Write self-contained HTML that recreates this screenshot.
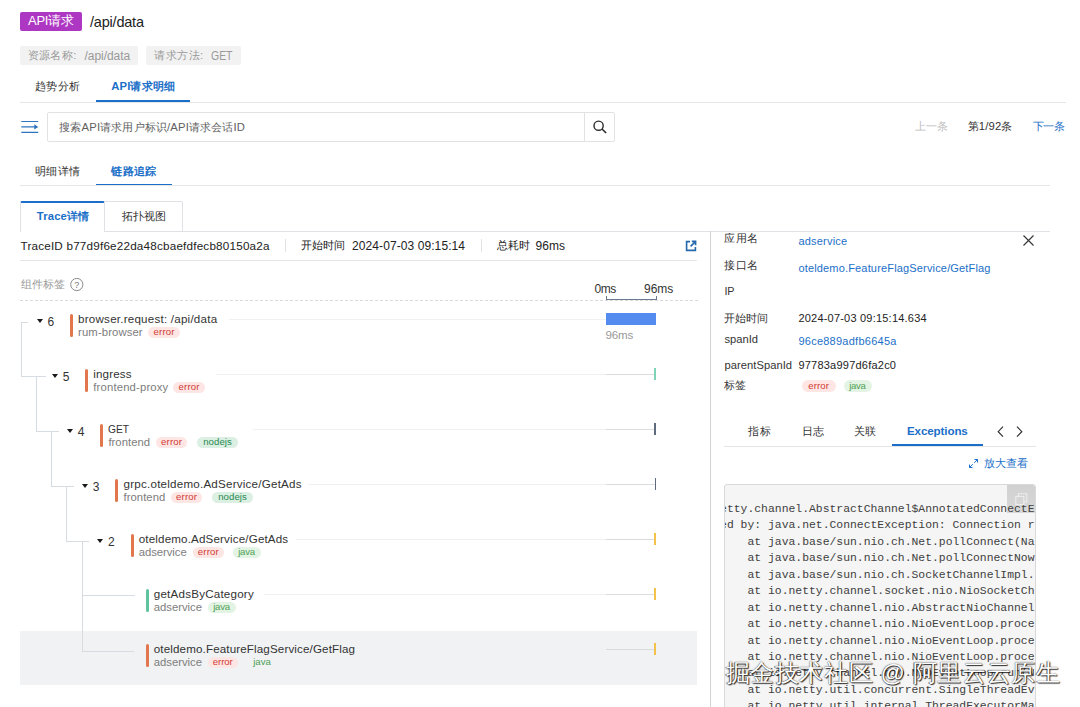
<!DOCTYPE html>
<html><head><meta charset="utf-8">
<style>
*{box-sizing:border-box;margin:0;padding:0}
html,body{width:1080px;height:707px;overflow:hidden;background:#fff}
body{font-family:"Liberation Sans",sans-serif;font-size:12px;color:#333;position:relative}
.a{position:absolute;white-space:nowrap}
.arr{position:absolute;width:0;height:0;border-left:3.5px solid transparent;border-right:3.5px solid transparent;border-top:4.5px solid #1a1a1a}
.code{position:absolute;left:724px;top:484px;width:311.7px;height:230px;background:#f5f5f5;border:1px solid #d9d9d9;border-radius:3px;overflow:hidden}
.code pre{position:absolute;left:-4.9px;top:15.8px;font-family:"Liberation Mono",monospace;font-size:11.4px;line-height:16.47px;color:#404040}
</style></head><body>
<div class="a" style="left:20px;top:12.2px;width:61.7px;height:18.8px;background:#ad37c3;border-radius:2px"></div>
<div class="a" style="left:20px;top:46.3px;width:117.5px;height:18.6px;background:#f2f2f2;border-radius:2px"></div>
<div class="a" style="left:146px;top:46.3px;width:95.3px;height:18.6px;background:#f2f2f2;border-radius:2px"></div>
<div class="a" style="left:95.75px;top:100px;width:94.25px;height:2px;background:#1b6fc8;"></div>
<div class="a" style="left:20px;top:101.5px;width:1046px;height:1px;background:#e5e6e8;"></div>
<svg class="a" style="left:20.6px;top:119.9px" width="18" height="14" viewBox="0 0 18 14"><g stroke="#2f74bd" stroke-width="1.2" fill="none"><path d="M0.3 1.5H17.2M0.3 6.9H16M0.3 12.4H17.2"/></g><path d="M13.3 4.3L17.3 6.9L13.3 9.5Z" fill="#2f74bd"/></svg>
<div class="a" style="left:46.75px;top:112px;width:568.5px;height:29.5px;border:1px solid #e2e2e2;border-radius:2px"></div>
<div class="a" style="left:584px;top:112px;width:1px;height:29.5px;background:#e2e2e2;"></div>
<svg class="a" style="left:593px;top:120px" width="15" height="15" viewBox="0 0 15 15"><circle cx="5.6" cy="5.7" r="4.6" stroke="#2a2a2a" stroke-width="1.4" fill="none"/><path d="M9 9L13.1 13" stroke="#2a2a2a" stroke-width="1.6" stroke-linecap="butt"/></svg>
<div class="a" style="left:95.75px;top:184px;width:75.75px;height:2.2px;background:#1b6fc8;"></div>
<div class="a" style="left:20px;top:185.3px;width:1030px;height:1px;background:#e5e6e8;"></div>
<div class="a" style="left:20px;top:231px;width:1030px;height:1px;background:#dfe1e4;"></div>
<div class="a" style="left:20.3px;top:201px;width:85px;height:31px;border:1px solid #dfe1e4;border-bottom:0;border-top:2px solid #1b6fc8;background:#fff;border-radius:2px 2px 0 0"></div>
<div class="a" style="left:104.3px;top:201.2px;width:78.5px;height:29.8px;border:1px solid #dfe1e4;border-bottom:0;border-radius:2px 2px 0 0"></div>
<div class="a" style="left:285.3px;top:239px;width:1px;height:13px;background:#e2e2e2;"></div>
<div class="a" style="left:481px;top:239px;width:1px;height:13px;background:#e2e2e2;"></div>
<svg class="a" style="left:685px;top:239.8px" width="12" height="12" viewBox="0 0 12 12"><g stroke="#2468ad" stroke-width="1.6" fill="none"><path d="M5 1.6H1.6V10.4H10.4V7"/><path d="M6.8 1.4H10.6V5.2M10.4 1.6L5.6 6.4"/></g></svg>
<div class="a" style="left:20px;top:260px;width:676.5px;height:1px;background:#e4e5e7;"></div>
<svg class="a" style="left:70px;top:278px" width="14" height="14" viewBox="0 0 14 14"><circle cx="6.8" cy="6.5" r="6.1" stroke="#8a8a8a" stroke-width="1" fill="none"/><text x="6.8" y="9.9" font-size="9" text-anchor="middle" fill="#777" font-family="Liberation Sans">?</text></svg>
<div class="a" style="left:20px;top:299.7px;width:679px;height:1px;background:repeating-linear-gradient(90deg,#dadada 0 3px,transparent 3px 5px)"></div>
<div class="a" style="left:605.5px;top:295.8px;width:51.3px;height:4px;border:1px solid #6b7a90;border-top:0"></div>
<div class="a" style="left:20px;top:631.3px;width:677px;height:54.2px;background:#f0f2f4;"></div>
<div class="a" style="left:710px;top:231px;width:1px;height:476px;background:#d2d3d5;"></div>
<div class="a" style="left:20.7px;top:321.7px;width:1px;height:55.30000000000001px;background:#d7dce2;"></div>
<div class="a" style="left:36.0px;top:376px;width:1px;height:56.19999999999999px;background:#d7dce2;"></div>
<div class="a" style="left:51.2px;top:431.2px;width:1px;height:55.60000000000002px;background:#d7dce2;"></div>
<div class="a" style="left:66.3px;top:485.8px;width:1px;height:56.400000000000034px;background:#d7dce2;"></div>
<div class="a" style="left:81.5px;top:541.2px;width:1px;height:110.29999999999995px;background:#d7dce2;"></div>
<div class="a" style="left:20.7px;top:321.7px;width:7px;height:1px;background:#d7dce2;"></div>
<div class="a" style="left:20.7px;top:376px;width:25px;height:1px;background:#d7dce2;"></div>
<div class="a" style="left:36.0px;top:431.2px;width:23px;height:1px;background:#d7dce2;"></div>
<div class="a" style="left:51.2px;top:485.8px;width:23px;height:1px;background:#d7dce2;"></div>
<div class="a" style="left:66.3px;top:541.2px;width:23px;height:1px;background:#d7dce2;"></div>
<div class="a" style="left:81.5px;top:595.2px;width:53px;height:1px;background:#d7dce2;"></div>
<div class="a" style="left:81.5px;top:650.5px;width:52px;height:1px;background:#d7dce2;"></div>
<div class="arr" style="left:36.75px;top:319.2px"></div>
<div class="a" style="left:70.0px;top:314.2px;width:3px;height:22.6px;background:#e2764d;border-radius:1.5px"></div>
<div class="a" style="left:148px;top:326.69999999999993px;width:32px;height:11.4px;background:#fde6e3;border-radius:6px"></div>
<div class="a" style="left:229px;top:318.59999999999997px;width:377px;height:1px;background:#eff0f2;"></div>
<div class="a" style="left:606.2px;top:313.1px;width:50px;height:11.5px;background:#548bee;"></div>
<div class="arr" style="left:51.85px;top:374.2px"></div>
<div class="a" style="left:85.15px;top:369.2px;width:3px;height:22.6px;background:#e2764d;border-radius:1.5px"></div>
<div class="a" style="left:173px;top:381.69999999999993px;width:32px;height:11.4px;background:#fde6e3;border-radius:6px"></div>
<div class="a" style="left:216px;top:373.59999999999997px;width:390px;height:1px;background:#eff0f2;"></div>
<div class="a" style="left:606px;top:373.5px;width:48.6px;height:1px;background:#d9dcde;"></div>
<div class="a" style="left:654.3px;top:368.2px;width:2px;height:11.8px;background:#7fd3b6;"></div>
<div class="arr" style="left:66.95px;top:429.2px"></div>
<div class="a" style="left:100.3px;top:424.2px;width:3px;height:22.6px;background:#e2764d;border-radius:1.5px"></div>
<div class="a" style="left:155.75px;top:436.69999999999993px;width:31.5px;height:11.4px;background:#fde6e3;border-radius:6px"></div>
<div class="a" style="left:197px;top:436.69999999999993px;width:41px;height:11.4px;background:#dcefe3;border-radius:6px"></div>
<div class="a" style="left:252.5px;top:428.59999999999997px;width:353.5px;height:1px;background:#eff0f2;"></div>
<div class="a" style="left:606px;top:428.5px;width:48.6px;height:1px;background:#d9dcde;"></div>
<div class="a" style="left:654.3px;top:423.2px;width:2px;height:11.8px;background:#5d6b7c;"></div>
<div class="arr" style="left:82.05px;top:484.2px"></div>
<div class="a" style="left:115.45px;top:479.2px;width:3px;height:22.6px;background:#e2764d;border-radius:1.5px"></div>
<div class="a" style="left:170.75px;top:491.69999999999993px;width:31.5px;height:11.4px;background:#fde6e3;border-radius:6px"></div>
<div class="a" style="left:212px;top:491.69999999999993px;width:41px;height:11.4px;background:#dcefe3;border-radius:6px"></div>
<div class="a" style="left:308px;top:483.59999999999997px;width:298px;height:1px;background:#eff0f2;"></div>
<div class="a" style="left:606px;top:483.5px;width:48.6px;height:1px;background:#d9dcde;"></div>
<div class="a" style="left:655px;top:478.2px;width:1.2px;height:11.8px;background:#5d6b7c;"></div>
<div class="arr" style="left:97.15px;top:539.1999999999999px"></div>
<div class="a" style="left:130.6px;top:534.1999999999999px;width:3px;height:22.6px;background:#e2764d;border-radius:1.5px"></div>
<div class="a" style="left:192.5px;top:546.6999999999999px;width:31.5px;height:11.4px;background:#fde6e3;border-radius:6px"></div>
<div class="a" style="left:232.5px;top:546.6999999999999px;width:28.25px;height:11.4px;background:#e4f4e4;border-radius:6px"></div>
<div class="a" style="left:296px;top:538.6px;width:310px;height:1px;background:#eff0f2;"></div>
<div class="a" style="left:606px;top:538.5px;width:48.6px;height:1px;background:#d9dcde;"></div>
<div class="a" style="left:654.3px;top:533.1999999999999px;width:2px;height:11.8px;background:#f3c24b;"></div>
<div class="a" style="left:145.75px;top:589.1999999999999px;width:3px;height:22.6px;background:#5fc39d;border-radius:1.5px"></div>
<div class="a" style="left:207.5px;top:601.6999999999999px;width:28.25px;height:11.4px;background:#e4f4e4;border-radius:6px"></div>
<div class="a" style="left:263.75px;top:593.6px;width:342.25px;height:1px;background:#eff0f2;"></div>
<div class="a" style="left:606px;top:593.5px;width:48.6px;height:1px;background:#d9dcde;"></div>
<div class="a" style="left:654.3px;top:588.1999999999999px;width:2px;height:11.8px;background:#f3c24b;"></div>
<div class="a" style="left:145.75px;top:644.1999999999999px;width:3px;height:22.6px;background:#e2764d;border-radius:1.5px"></div>
<div class="a" style="left:207.5px;top:656.6999999999999px;width:30.5px;height:11.4px;background:#fde6e3;border-radius:6px"></div>
<div class="a" style="left:606px;top:648.5px;width:48.6px;height:1px;background:#d9dcde;"></div>
<div class="a" style="left:654.3px;top:643.1999999999999px;width:2px;height:11.8px;background:#f3c24b;"></div>
<svg class="a" style="left:1023.3px;top:235.2px" width="11" height="11" viewBox="0 0 11 11"><path d="M0.5 0.5L10.5 10.5M10.5 0.5L0.5 10.5" stroke="#333" stroke-width="1.1"/></svg>
<div class="a" style="left:801.6px;top:380.2px;width:34px;height:11.4px;background:#fde6e3;border-radius:6px"></div>
<div class="a" style="left:843.5px;top:380.2px;width:28px;height:11.4px;background:#e4f4e4;border-radius:6px"></div>
<svg class="a" style="left:997px;top:426.3px" width="7" height="11.4" viewBox="0 0 7 11.4"><path d="M6 0.7L1.2 5.7L6 10.7" stroke="#333" stroke-width="1.2" fill="none"/></svg>
<svg class="a" style="left:1016.2px;top:426.3px" width="7" height="11.4" viewBox="0 0 7 11.4"><path d="M1 0.7L5.8 5.7L1 10.7" stroke="#333" stroke-width="1.2" fill="none"/></svg>
<div class="a" style="left:892.3px;top:444px;width:91px;height:2.2px;background:#1b6fc8;"></div>
<div class="a" style="left:724px;top:445.6px;width:312px;height:1px;background:#e4e5e7;"></div>
<svg class="a" style="left:969.4px;top:459.4px" width="9" height="9" viewBox="0 0 9 9"><g stroke="#1b6fc8" stroke-width="1" fill="none"><path d="M5.5 0.5H8.5V3.5M8.5 0.5L5.2 3.8M3.5 8.5H0.5V5.5M0.5 8.5L3.8 5.2"/></g></svg>
<div class="code"><div style="position:absolute;right:0;top:0;width:27.5px;height:28px;background:linear-gradient(#d1d1d1,#d8d8d8);border-radius:0 2px 0 0"></div><svg style="position:absolute;right:7.2px;top:7.5px" width="12.5" height="12.5" viewBox="0 0 13 13"><g stroke="#ececec" stroke-width="1.2" fill="none"><rect x="0.8" y="3.6" width="8.4" height="8.4"/><path d="M3.6 3.6V0.8H12.2V9.4H9.2"/></g></svg><pre>etty.channel.AbstractChannel$AnnotatedConnectE
ed by: java.net.ConnectException: Connection r
    at java.base/sun.nio.ch.Net.pollConnect(Na
    at java.base/sun.nio.ch.Net.pollConnectNow
    at java.base/sun.nio.ch.SocketChannelImpl.
    at io.netty.channel.socket.nio.NioSocketCh
    at io.netty.channel.nio.AbstractNioChannel
    at io.netty.channel.nio.NioEventLoop.proce
    at io.netty.channel.nio.NioEventLoop.proce
    at io.netty.channel.nio.NioEventLoop.proce
    at io.netty.channel.nio.NioEventLoop.run(N
    at io.netty.util.concurrent.SingleThreadEv
    at io.netty.util.internal.ThreadExecutorMa
    at io.netty.util.concurrent.FastThreadLoca</pre></div>
<div class="a" style="left:28px;top:14.00px;font-size:13px;line-height:14px;color:#fff;letter-spacing:-0.242px;">API请求</div>
<div class="a" style="left:90px;top:15.00px;font-size:14.5px;line-height:14px;color:#222;letter-spacing:-0.205px;">/api/data</div>
<div class="a" style="left:27.5px;top:48.00px;font-size:11.25px;line-height:14px;color:#999;letter-spacing:0.465px;">资源名称:</div>
<div class="a" style="left:84.5px;top:48.80px;font-size:12px;line-height:14px;color:#999;letter-spacing:-0.043px;">/api/data</div>
<div class="a" style="left:154.25px;top:48.00px;font-size:11.25px;line-height:14px;color:#999;letter-spacing:0.465px;">请求方法:</div>
<div class="a" style="left:210.8px;top:48.80px;font-size:12px;line-height:14px;color:#999;transform-origin:0 50%;transform:scaleX(0.8714);">GET</div>
<div class="a" style="left:35px;top:79.20px;font-size:11.25px;line-height:14px;color:#333;letter-spacing:0.333px;">趋势分析</div>
<div class="a" style="left:111.25px;top:79.20px;font-size:11.25px;line-height:14px;color:#1b6fc8;letter-spacing:0.164px;font-weight:bold">API请求明细</div>
<div class="a" style="left:59.25px;top:119.70px;font-size:11.25px;line-height:14px;color:#606060;letter-spacing:0.155px;">搜索API请求用户标识/API请求会话ID</div>
<div class="a" style="left:915px;top:119.20px;font-size:11.25px;line-height:14px;color:#bdbdbd;letter-spacing:-0.250px;">上一条</div>
<div class="a" style="left:967.5px;top:119.20px;font-size:11.25px;line-height:14px;color:#333;letter-spacing:0.219px;">第1/92条</div>
<div class="a" style="left:1032.5px;top:119.20px;font-size:11.25px;line-height:14px;color:#1b6fc8;letter-spacing:-0.250px;">下一条</div>
<div class="a" style="left:35px;top:163.70px;font-size:11.25px;line-height:14px;color:#333;letter-spacing:0.333px;">明细详情</div>
<div class="a" style="left:111.25px;top:163.70px;font-size:11.25px;line-height:14px;color:#1b6fc8;letter-spacing:0.333px;font-weight:bold">链路追踪</div>
<div class="a" style="left:36.75px;top:208.80px;font-size:11.25px;line-height:14px;color:#1b6fc8;letter-spacing:0.182px;font-weight:bold">Trace详情</div>
<div class="a" style="left:121.75px;top:208.80px;font-size:11.25px;line-height:14px;color:#333;letter-spacing:0.167px;">拓扑视图</div>
<div class="a" style="left:20.5px;top:238.80px;font-size:11.7px;line-height:14px;color:#222;letter-spacing:0.197px;">TraceID b77d9f6e22da48cbaefdfecb80150a2a</div>
<div class="a" style="left:301.25px;top:238.00px;font-size:11.25px;line-height:14px;color:#222;letter-spacing:-0.083px;">开始时间</div>
<div class="a" style="left:352px;top:238.80px;font-size:12px;line-height:14px;color:#222;letter-spacing:0.087px;">2024-07-03 09:15:14</div>
<div class="a" style="left:497.3px;top:238.00px;font-size:11.25px;line-height:14px;color:#222;letter-spacing:-0.150px;">总耗时</div>
<div class="a" style="left:535.5px;top:238.80px;font-size:12px;line-height:14px;color:#222;letter-spacing:0.052px;">96ms</div>
<div class="a" style="left:20.5px;top:276.90px;font-size:11.25px;line-height:14px;color:#999;letter-spacing:0.167px;">组件标签</div>
<div class="a" style="left:594.4px;top:281.60px;font-size:12px;line-height:14px;color:#333;letter-spacing:-0.436px;">0ms</div>
<div class="a" style="left:644px;top:281.60px;font-size:12px;line-height:14px;color:#333;letter-spacing:-0.048px;">96ms</div>
<div class="a" style="left:47.55px;top:315.10px;font-size:12px;line-height:14px;color:#333;letter-spacing:0.000px;">6</div>
<div class="a" style="left:78.1px;top:312.30px;font-size:11.6px;line-height:14px;color:#333;letter-spacing:0.223px;">browser.request: /api/data</div>
<div class="a" style="left:78.1px;top:324.90px;font-size:11.3px;line-height:14px;color:#7d7d7d;letter-spacing:0.109px;">rum-browser</div>
<div class="a" style="left:153.5px;top:326.30px;font-size:9.6px;line-height:12px;color:#d23c36;letter-spacing:0.184px;">error</div>
<div class="a" style="left:605.5px;top:328.20px;font-size:11.6px;line-height:14px;color:#999;letter-spacing:-0.186px;">96ms</div>
<div class="a" style="left:62.650000000000006px;top:370.10px;font-size:12px;line-height:14px;color:#333;letter-spacing:0.000px;">5</div>
<div class="a" style="left:93.25px;top:367.30px;font-size:11.6px;line-height:14px;color:#333;letter-spacing:0.146px;">ingress</div>
<div class="a" style="left:93.25px;top:379.90px;font-size:11.3px;line-height:14px;color:#7d7d7d;letter-spacing:0.166px;">frontend-proxy</div>
<div class="a" style="left:178.5px;top:381.30px;font-size:9.6px;line-height:12px;color:#d23c36;letter-spacing:0.184px;">error</div>
<div class="a" style="left:77.75px;top:425.10px;font-size:12px;line-height:14px;color:#333;letter-spacing:0.000px;">4</div>
<div class="a" style="left:108.39999999999999px;top:422.30px;font-size:11.6px;line-height:14px;color:#333;transform-origin:0 50%;transform:scaleX(0.8807);">GET</div>
<div class="a" style="left:108.39999999999999px;top:434.90px;font-size:11.3px;line-height:14px;color:#7d7d7d;letter-spacing:0.040px;">frontend</div>
<div class="a" style="left:161.0px;top:436.30px;font-size:9.6px;line-height:12px;color:#d23c36;letter-spacing:0.184px;">error</div>
<div class="a" style="left:203.125px;top:436.30px;font-size:9.6px;line-height:12px;color:#2a8a52;letter-spacing:0.094px;">nodejs</div>
<div class="a" style="left:92.85px;top:480.10px;font-size:12px;line-height:14px;color:#333;letter-spacing:0.000px;">3</div>
<div class="a" style="left:123.55px;top:477.30px;font-size:11.6px;line-height:14px;color:#333;letter-spacing:0.227px;">grpc.oteldemo.AdService/GetAds</div>
<div class="a" style="left:123.55px;top:489.90px;font-size:11.3px;line-height:14px;color:#7d7d7d;letter-spacing:0.040px;">frontend</div>
<div class="a" style="left:176.0px;top:491.30px;font-size:9.6px;line-height:12px;color:#d23c36;letter-spacing:0.184px;">error</div>
<div class="a" style="left:218.125px;top:491.30px;font-size:9.6px;line-height:12px;color:#2a8a52;letter-spacing:0.094px;">nodejs</div>
<div class="a" style="left:107.95px;top:535.10px;font-size:12px;line-height:14px;color:#333;letter-spacing:0.000px;">2</div>
<div class="a" style="left:138.7px;top:532.30px;font-size:11.6px;line-height:14px;color:#333;letter-spacing:0.160px;">oteldemo.AdService/GetAds</div>
<div class="a" style="left:138.7px;top:544.90px;font-size:11.3px;line-height:14px;color:#7d7d7d;letter-spacing:-0.045px;">adservice</div>
<div class="a" style="left:197.75px;top:546.30px;font-size:9.6px;line-height:12px;color:#d23c36;letter-spacing:0.184px;">error</div>
<div class="a" style="left:238.125px;top:546.30px;font-size:9.6px;line-height:12px;color:#4f9f55;letter-spacing:-0.203px;">java</div>
<div class="a" style="left:153.75px;top:587.30px;font-size:11.6px;line-height:14px;color:#333;letter-spacing:0.222px;">getAdsByCategory</div>
<div class="a" style="left:153.75px;top:599.90px;font-size:11.3px;line-height:14px;color:#7d7d7d;letter-spacing:-0.014px;">adservice</div>
<div class="a" style="left:213.125px;top:601.30px;font-size:9.6px;line-height:12px;color:#4f9f55;letter-spacing:-0.203px;">java</div>
<div class="a" style="left:153.75px;top:642.30px;font-size:11.6px;line-height:14px;color:#333;letter-spacing:0.138px;">oteldemo.FeatureFlagService/GetFlag</div>
<div class="a" style="left:153.75px;top:654.90px;font-size:11.3px;line-height:14px;color:#7d7d7d;letter-spacing:-0.014px;">adservice</div>
<div class="a" style="left:212.75px;top:656.30px;font-size:9.6px;line-height:12px;color:#d23c36;letter-spacing:-0.066px;">error</div>
<div class="a" style="left:253.25px;top:656.30px;font-size:9.6px;line-height:12px;color:#4f9f55;letter-spacing:-0.036px;">java</div>
<div class="a" style="left:724.4px;top:231.20px;font-size:11.25px;line-height:14px;color:#333;letter-spacing:0.200px;">应用名</div>
<div class="a" style="left:798.4px;top:234.40px;font-size:11px;line-height:14px;color:#1b6fc8;letter-spacing:0.215px;">adservice</div>
<div class="a" style="left:724.4px;top:257.50px;font-size:11.25px;line-height:14px;color:#333;letter-spacing:0.200px;">接口名</div>
<div class="a" style="left:798.4px;top:261.00px;font-size:11px;line-height:14px;color:#1b6fc8;letter-spacing:0.165px;">oteldemo.FeatureFlagService/GetFlag</div>
<div class="a" style="left:724.4px;top:284.10px;font-size:10.8px;line-height:14px;color:#333;letter-spacing:-0.103px;">IP</div>
<div class="a" style="left:724.4px;top:310.60px;font-size:11.25px;line-height:14px;color:#333;letter-spacing:0.033px;">开始时间</div>
<div class="a" style="left:798.4px;top:310.90px;font-size:11px;line-height:14px;color:#222;letter-spacing:0.211px;">2024-07-03 09:15:14.634</div>
<div class="a" style="left:724.4px;top:331.70px;font-size:11.2px;line-height:14px;color:#333;letter-spacing:0.021px;">spanId</div>
<div class="a" style="left:798.4px;top:334.40px;font-size:11px;line-height:14px;color:#1b6fc8;letter-spacing:0.252px;">96ce889adfb6645a</div>
<div class="a" style="left:724.4px;top:358.30px;font-size:11.2px;line-height:14px;color:#333;letter-spacing:0.047px;">parentSpanId</div>
<div class="a" style="left:798.4px;top:358.30px;font-size:11px;line-height:14px;color:#222;letter-spacing:0.225px;">97783a997d6fa2c0</div>
<div class="a" style="left:724.4px;top:378.20px;font-size:11.25px;line-height:14px;color:#333;letter-spacing:0.100px;">标签</div>
<div class="a" style="left:808.35px;top:379.80px;font-size:9.6px;line-height:12px;color:#d23c36;letter-spacing:0.059px;">error</div>
<div class="a" style="left:849.15px;top:379.80px;font-size:9.6px;line-height:12px;color:#4f9f55;letter-spacing:-0.303px;">java</div>
<div class="a" style="left:748px;top:424.00px;font-size:11.25px;line-height:14px;color:#333;letter-spacing:0.700px;">指标</div>
<div class="a" style="left:801.6px;top:424.00px;font-size:11.25px;line-height:14px;color:#333;letter-spacing:0.000px;">日志</div>
<div class="a" style="left:854.2px;top:424.00px;font-size:11.25px;line-height:14px;color:#333;letter-spacing:0.300px;">关联</div>
<div class="a" style="left:907px;top:424.10px;font-size:11.6px;line-height:14px;color:#1b6fc8;letter-spacing:-0.118px;font-weight:bold">Exceptions</div>
<div class="a" style="left:983.6px;top:456.40px;font-size:11.25px;line-height:14px;color:#1b6fc8;letter-spacing:0.233px;">放大查看</div>
<div class="a" style="left:725.5px;top:656.80px;font-size:24px;line-height:32px;color:#fff;letter-spacing:0.628px;text-shadow:1px 1px 1px rgba(0,0,0,.8),0 0 1.5px rgba(0,0,0,.7),-0.5px -0.5px 0.5px rgba(0,0,0,.5)">掘金技术社区 @ 阿里云云原生</div>
</body></html>
